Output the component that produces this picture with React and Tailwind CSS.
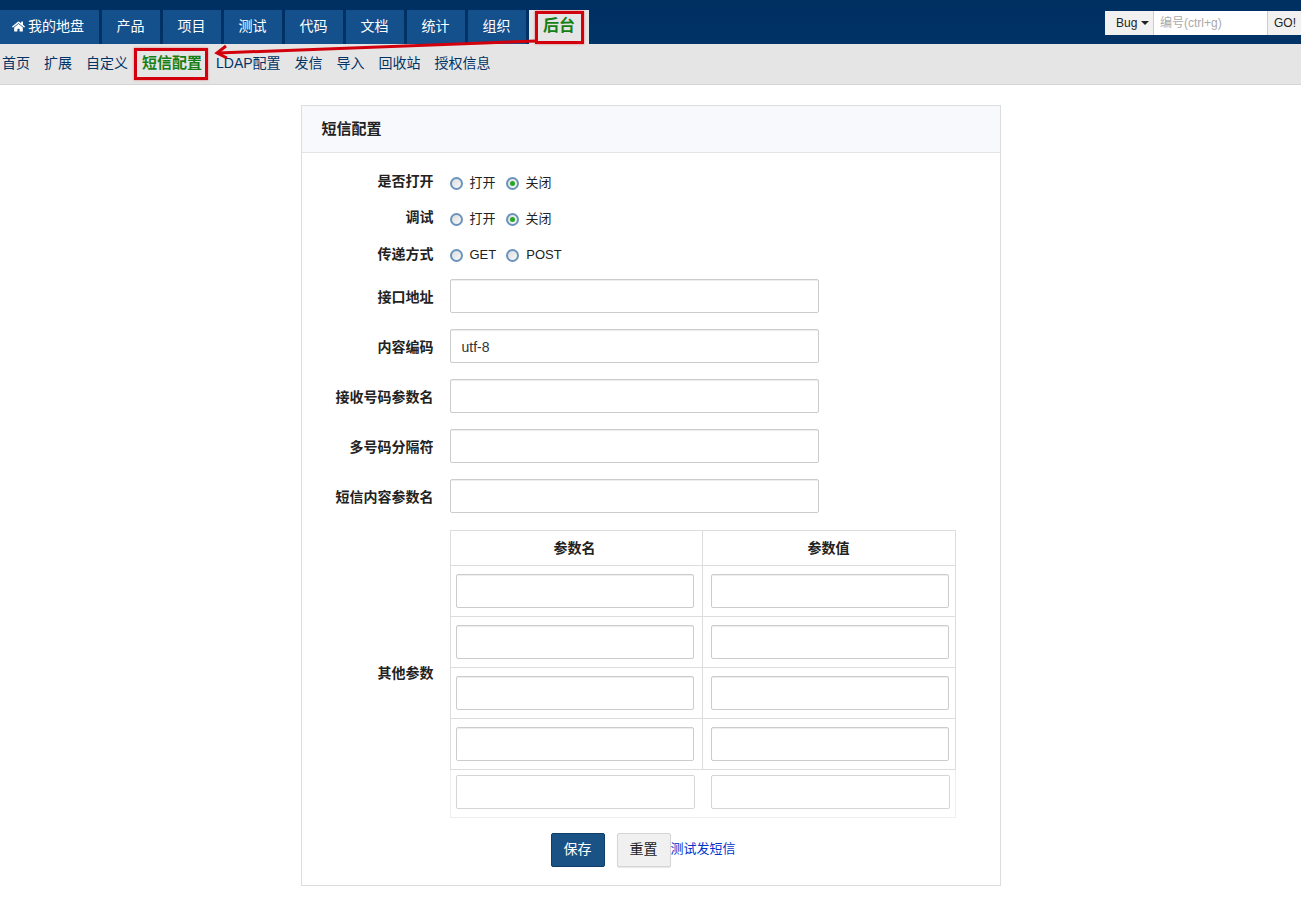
import React from "react";
import { FaHome } from "react-icons/fa";

const FONT = '"Liberation Sans", "Noto Sans CJK SC", sans-serif';
const tabs = ["产品", "项目", "测试", "代码", "文档", "统计", "组织"];
const subs = ["首页", "扩展", "自定义", "短信配置", "LDAP配置", "发信", "导入", "回收站", "授权信息"];

function Radio({ checked }) {
  return (
    <span className="relative inline-block w-[13px] h-[13px] rounded-full border-2 border-[#6a93bd] bg-gradient-to-br from-[#dcdcdc] to-[#fafafa] shrink-0">
      {checked && <span className="absolute left-[2px] top-[2px] w-[5px] h-[5px] rounded-full bg-[#22a822]" />}
    </span>
  );
}

function RadioRow({ label, a, b, checked, labelClass = "pb-[2px]" }) {
  return (
    <div className="flex items-center h-[36px]">
      <div className={`w-[132px] text-right text-[14px] font-bold text-[#222] ${labelClass}`}>{label}</div>
      <div className="ml-[16px] flex items-center text-[13px] text-[#222] mt-[1px]">
        <span className="mt-[2px] flex"><Radio /></span>
        <span className="ml-[7px] mr-[10px]">{a}</span>
        <span className="mt-[2px] flex"><Radio checked={checked} /></span>
        <span className="ml-[7px]">{b}</span>
      </div>
    </div>
  );
}

function Input({ w = "w-full", value, light }) {
  return (
    <input
      readOnly
      value={value || ""}
      className={`${w} block h-[34px] px-[11px] pt-[2px] text-[14px] text-[#333] bg-white rounded-[2px] border ${light ? "border-[#d5d5d5]" : "border-[#ccc] shadow-[inset_0_1px_1px_rgba(0,0,0,0.075)]"} outline-none`}
    />
  );
}

function InputRow({ label, value }) {
  return (
    <div className="flex items-center h-[34px] mb-[16px]">
      <div className="w-[132px] text-right text-[14px] font-bold text-[#222] pt-[2px]">{label}</div>
      <div className="ml-[16px]"><Input w="w-[369px]" value={value} /></div>
    </div>
  );
}

export default function App() {
  return (
    <div className="relative min-h-[898px] bg-white" style={{ fontFamily: FONT }}>
      {/* header */}
      <div className="h-[44px] bg-gradient-to-b from-[#002f62] to-[#003366] flex justify-between">
        <nav className="flex items-end gap-[3px] text-[14px] text-white">
          <a className="w-[99px] h-[34px] bg-[#14508c] flex items-center justify-center gap-[3px] pr-[3px] pb-[1px]">
            <FaHome className="w-[13px] h-[13px]" />
            <span>我的地盘</span>
          </a>
          {tabs.map((t) => (
            <a key={t} className="w-[58px] h-[34px] bg-[#14508c] flex items-center justify-center pr-[1px] pb-[1px]">{t}</a>
          ))}
          <a className="w-[60px] h-[34px] bg-[#e5e5e5] flex items-center justify-center font-bold text-[16px] text-[#157f15] pb-[2px]">后台</a>
        </nav>
        <div className="flex items-start pt-[11px] text-[12px]">
          <div className="w-[49px] h-[24px] bg-[#f1f1f1] border-r border-[#ccc] flex items-center pl-[11px] text-[#222]">
            Bug
            <span className="ml-[4px] border-x-[4px] border-x-transparent border-t-[4px] border-t-[#222]" />
          </div>
          <div className="w-[113px] h-[24px] bg-white flex items-center pl-[6px] text-[#aaa]">编号(ctrl+g)</div>
          <div className="w-[34px] h-[24px] bg-[#f1f1f1] border-l border-[#ccc] flex items-center pl-[6px] text-[#222]">GO!</div>
        </div>
      </div>

      {/* sub nav */}
      <div className="h-[41px] bg-[#e5e5e5] border-b border-[#d4d4d4] flex items-center gap-[14px] pl-[2px] pb-[2px] text-[14px] text-[#003366]">
        {subs.map((s) => (
          <a key={s} className={s === "短信配置" ? "font-bold text-[15px] text-[#157f15]" : ""}>{s}</a>
        ))}
      </div>

      {/* panel */}
      <div className="w-[700px] h-[781px] mx-auto mt-[20px] border border-[#ddd]">
        <div className="h-[47px] bg-[#f8f9fd] border-b border-[#e4e4e4] flex items-center pl-[20px] text-[15px] font-bold text-[#222]">短信配置</div>
        <div className="pt-[11px]">
          <RadioRow label="是否打开" a="打开" b="关闭" checked />
          <RadioRow label="调试" a="打开" b="关闭" checked />
          <RadioRow label="传递方式" a="GET" b="POST" labelClass="" />
          <div className="h-[7px]" />
          <InputRow label="接口地址" />
          <InputRow label="内容编码" value="utf-8" />
          <InputRow label="接收号码参数名" />
          <InputRow label="多号码分隔符" />
          <InputRow label="短信内容参数名" />

          <div className="flex items-center mt-[17px]">
            <div className="w-[132px] text-right text-[14px] font-bold text-[#222] pb-[2px]">其他参数</div>
            <div className="ml-[16px] w-[506px]">
              <div className="border border-[#ddd] border-b-0">
                <div className="flex h-[35px] border-b border-[#ddd] text-[14px] font-bold text-[#222]">
                  <div className="w-[252px] border-r border-[#ddd] flex items-center justify-center pr-[3px]">参数名</div>
                  <div className="flex-1 flex items-center justify-center">参数值</div>
                </div>
                {[0, 1, 2, 3].map((i) => (
                  <div key={i} className="flex h-[51px] border-b border-[#ddd]">
                    <div className="w-[252px] border-r border-[#ddd] pl-[5px] pt-[8px]"><Input w="w-[238px]" /></div>
                    <div className="flex-1 pl-[8px] pt-[8px]"><Input w="w-[238px]" /></div>
                  </div>
                ))}
              </div>
              <div className="flex h-[48px] border border-t-0 border-[#eee]">
                <div className="w-[260px] pl-[5px] pt-[5px]"><Input w="w-[239px]" light /></div>
                <div className="flex-1 pt-[5px]"><Input w="w-[239px]" light /></div>
              </div>
            </div>
          </div>

          <div className="flex items-center mt-[15px] ml-[249px]">
            <button className="w-[54px] h-[34px] bg-[#1a5286] border border-[#0f3d6b] rounded-[2px] text-white text-[14px] pb-[2px]">保存</button>
            <button className="ml-[12px] w-[54px] h-[34px] bg-[#f0f0f0] border border-[#d5d5d5] rounded-[2px] text-[#222] text-[14px] pb-[2px] shadow-[0_1px_1px_rgba(0,0,0,0.1)]">重置</button>
            <a className="text-[13px] text-[#0033cc] pb-[2px]">测试发短信</a>
          </div>
        </div>
      </div>

      {/* annotations */}
      <div className="absolute left-[535px] top-[11px] w-[49px] h-[33px] border-[3px] border-[#d2000c] shadow-[0_0_2px_rgba(210,0,12,0.5)]" />
      <div className="absolute left-[134px] top-[48px] w-[74px] h-[32px] border-[3px] border-[#d2000c] shadow-[0_0_2px_rgba(210,0,12,0.5)]" />
      <svg className="absolute left-[210px] top-[36px]" width="330" height="26" viewBox="0 0 330 26">
        <line x1="326" y1="5" x2="8" y2="17" stroke="#d2000c" strokeWidth="3" />
        <path d="M16 10 L7 17 L17 22" fill="none" stroke="#d2000c" strokeWidth="3" />
      </svg>
    </div>
  );
}
